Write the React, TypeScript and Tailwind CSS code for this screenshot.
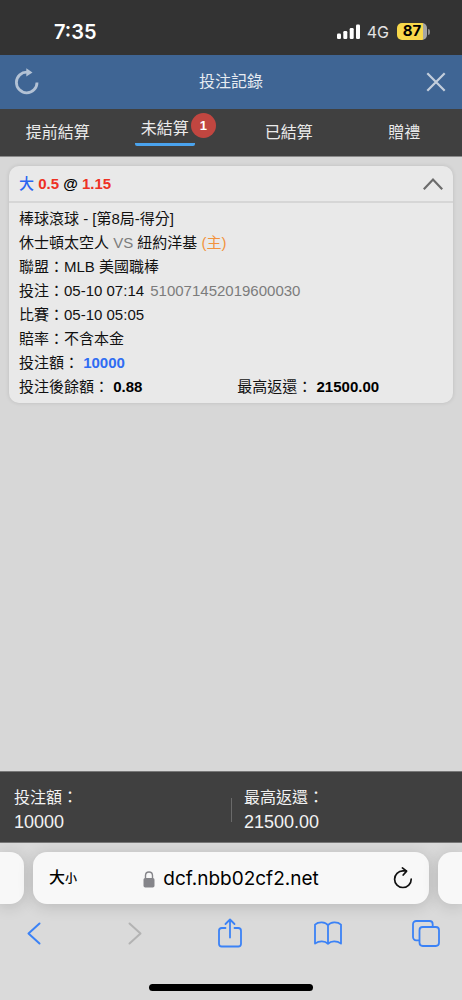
import React from "react";

const tabs = [
  { label: "提前結算" },
  { label: "未結算", count: 1 },
  { label: "已結算" },
  { label: "贈禮" },
];

function StatusBar() {
  return (
    <div className="flex h-[55px] shrink-0 items-center justify-between bg-[#333333] pt-2 pr-8 pl-[54px] font-['Inter','Liberation_Sans',sans-serif] text-white">
      <time className="text-xl font-semibold">7:35</time>
      <div className="flex items-center">
        <svg width="25" height="16" viewBox="0 0 25 16" fill="#fff" aria-hidden="true">
          <rect x="1" y="9.5" width="4" height="5.5" rx="1.2" />
          <rect x="7.3" y="7" width="4" height="8" rx="1.2" />
          <rect x="13.7" y="4" width="4" height="11" rx="1.2" />
          <rect x="20" y="0.5" width="4" height="14.5" rx="1.2" />
        </svg>
        <span className="ml-1.5 text-base text-[#e4e4e4]">4G</span>
        <span className="ml-2 flex items-center">
          <span className="flex h-[17px] w-[30px] items-center justify-center rounded-[5px] bg-[linear-gradient(90deg,#f8d84a_87%,#a5a5a5_87%)] text-[15px] font-bold text-black">
            87
          </span>
          <span className="ml-px h-1.5 w-0.5 rounded-r-full bg-[#8c8c8c]" />
        </span>
      </div>
    </div>
  );
}

function PageHeader() {
  return (
    <header className="flex h-[54px] shrink-0 items-center justify-between bg-[#3f6594] px-3 text-[#e6ebf1]">
      <button type="button" aria-label="重新整理" className="flex w-7 justify-center">
        <svg width="26" height="28" viewBox="0 1 26 28" fill="none" stroke="#b3c2d5" aria-hidden="true">
          <path d="M24 15.4A10.3 10.3 0 1 1 14.3 5.2" strokeWidth="2.8" />
          <path d="M13.3 1.2L19.5 5.4L13.3 9.6Z" fill="#b3c2d5" stroke="none" />
        </svg>
      </button>
      <h1 className="text-base">投注記錄</h1>
      <button type="button" aria-label="關閉" className="flex w-7 justify-center">
        <svg width="20" height="20" viewBox="0 0 20 20" fill="none" stroke="#c3cedc" strokeWidth="2.2" aria-hidden="true">
          <path d="M1.3 1.3L18.7 18.7M18.7 1.3L1.3 18.7" />
        </svg>
      </button>
    </header>
  );
}

function Tabs() {
  return (
    <nav className="grid h-12 shrink-0 grid-cols-4 border-b border-[#8a8a8a] bg-[#404040] text-base text-[#ebebeb]">
      {tabs.map((tab) => (
        <button key={tab.label} type="button" className="flex items-center justify-center">
          {tab.count ? (
            <span className="flex items-start pb-1.5 pl-1">
              <span className="rounded-b-xs border-b-3 border-[#4aa3ee] px-1.5 pt-1 pb-0.5">{tab.label}</span>
              <span className="-ml-1 flex size-[25px] items-center justify-center rounded-full bg-[#c14640] text-[13px] font-bold text-white">
                {tab.count}
              </span>
            </span>
          ) : (
            tab.label
          )}
        </button>
      ))}
    </nav>
  );
}

function BetCard() {
  return (
    <article className="rounded-[10px] bg-[#e9e9e9] text-[15px] leading-6 text-[#111] shadow-[0_0_4px_rgba(0,0,0,0.12)]">
      <div className="flex h-[37px] items-center justify-between border-b-2 border-[#d6d6d6] px-2.5">
        <h2 className="font-bold text-[#ee3124]">
          <span className="font-medium text-[#2b66f0]">大</span> 0.5 <span className="text-black">@</span> 1.15
        </h2>
        <button type="button" aria-label="收合">
          <svg width="20" height="12" viewBox="0 0 20 12" fill="none" stroke="#6c6c6c" strokeWidth="2.2" aria-hidden="true">
            <path d="M0.8 11.2L10 1.6L19.2 11.2" />
          </svg>
        </button>
      </div>
      <div className="px-2.5 py-1">
        <p>棒球滾球 - [第8局-得分]</p>
        <p>
          休士頓太空人 <span className="text-[#7c7c7c]">VS</span> 紐約洋基 <span className="text-[#f2923c]">(主)</span>
        </p>
        <p>聯盟：MLB 美國職棒</p>
        <p>
          投注：05-10 07:14 <span className="ml-0.5 text-[#7c7c7c]">510071452019600030</span>
        </p>
        <p>比賽：05-10 05:05</p>
        <p>賠率：不含本金</p>
        <p>
          投注額： <b className="text-[#2f6df3]">10000</b>
        </p>
        <div className="grid grid-cols-[103fr_97fr]">
          <p>
            投注後餘額： <b className="text-black">0.88</b>
          </p>
          <p>
            最高返還： <b className="text-black">21500.00</b>
          </p>
        </div>
      </div>
    </article>
  );
}

function Totals() {
  return (
    <footer className="grid h-[72px] shrink-0 grid-cols-2 items-center border-y border-[#777] bg-[#404040] pt-1.5 text-[#f2f2f2]">
      <div className="pl-3.5">
        <p className="text-base leading-6">投注額：</p>
        <p className="text-lg leading-6">10000</p>
      </div>
      <div className="flex items-center gap-3">
        <span className="h-6 w-px bg-[#6a6a6a]" />
        <div>
          <p className="text-base leading-6">最高返還：</p>
          <p className="text-lg leading-6">21500.00</p>
        </div>
      </div>
    </footer>
  );
}

function BrowserBar() {
  return (
    <div className="shrink-0 overflow-hidden bg-[#dadada] pt-[9px] pb-[9px]">
      <div className="flex h-[52px] gap-[9px]">
        <div className="w-6 shrink-0 rounded-r-[14px] bg-[#f8f8f8] shadow-[0_2px_16px_rgba(0,0,0,0.16)]" />
        <div className="flex flex-1 items-center justify-between rounded-[14px] bg-[#f8f8f8] px-4 text-black shadow-[0_2px_16px_rgba(0,0,0,0.16)]">
          <button type="button" className="w-8 text-left text-base leading-6 font-medium whitespace-nowrap">
            大<span className="text-xs">小</span>
          </button>
          <a href="#address" className="flex items-center gap-2 pt-0.5 font-['Inter','Liberation_Sans',sans-serif] text-[19px]">
            <svg width="12" height="17" viewBox="0 0 12 17" fill="none" aria-hidden="true">
              <rect x="0.5" y="7" width="11" height="9.5" rx="1.8" fill="#85858a" />
              <path d="M2.5 8V4.6C2.5 -0.2 9.5 -0.2 9.5 4.6V8" stroke="#85858a" strokeWidth="1.4" />
            </svg>
            dcf.nbb02cf2.net
          </a>
          <button type="button" aria-label="重新載入" className="flex w-8 justify-end">
            <svg width="20" height="23" viewBox="0 0 20 23" fill="none" stroke="#111" strokeWidth="1.7" strokeLinecap="round" strokeLinejoin="round" aria-hidden="true">
              <path d="M18.2 12.2A8.3 8.3 0 1 1 9.9 3.9H13.2" />
              <path d="M9.4 0.9L13.6 4.1L10.2 8" />
            </svg>
          </button>
        </div>
        <div className="w-6 shrink-0 rounded-l-[14px] bg-[#f8f8f8] shadow-[0_2px_16px_rgba(0,0,0,0.16)]" />
      </div>
      <nav className="mt-3.5 flex h-[30px] items-center justify-between pr-[22px] pl-5 text-[#3b82f6]">
        <button type="button" aria-label="上一頁" className="flex w-7 justify-center">
          <svg width="14" height="23" viewBox="0 0 14 23" fill="none" stroke="currentColor" strokeWidth="2" strokeLinecap="round" strokeLinejoin="round" aria-hidden="true">
            <path d="M12.5 1.5L1.5 11.5L12.5 21.5" />
          </svg>
        </button>
        <button type="button" aria-label="下一頁" className="flex w-7 justify-end pr-1 text-[#b3b3b3]">
          <svg width="14" height="23" viewBox="0 0 14 23" fill="none" stroke="currentColor" strokeWidth="2" strokeLinecap="round" strokeLinejoin="round" aria-hidden="true">
            <path d="M1.5 1.5L12.5 11.5L1.5 21.5" />
          </svg>
        </button>
        <button type="button" aria-label="分享" className="flex w-7 justify-center">
          <svg width="26" height="30" viewBox="0 0 26 30" fill="none" stroke="currentColor" strokeWidth="1.8" strokeLinecap="round" strokeLinejoin="round" aria-hidden="true">
            <path d="M8.5 10H4.8A2.8 2.8 0 0 0 2 12.8V25.7A2.8 2.8 0 0 0 4.8 28.5H21.2A2.8 2.8 0 0 0 24 25.7V12.8A2.8 2.8 0 0 0 21.2 10H17.5" />
            <path d="M13 19.5V1.8M8.5 6L13 1.5L17.5 6" />
          </svg>
        </button>
        <button type="button" aria-label="書籤" className="flex w-7 justify-center">
          <svg width="28" height="24" viewBox="0 0 28 24" fill="none" stroke="currentColor" strokeWidth="1.8" strokeLinecap="round" strokeLinejoin="round" aria-hidden="true">
            <path d="M14 4.2C11.5 0.6 4.5 0.4 1 3.6V22.6C5 19.6 11 19.6 14 22.8C17 19.6 23 19.6 27 22.6V3.6C23.5 0.4 16.5 0.6 14 4.2ZM14 4.2V22.8" />
          </svg>
        </button>
        <button type="button" aria-label="分頁" className="flex w-7 justify-center">
          <svg width="28" height="27" viewBox="0 0 28 27" fill="none" stroke="currentColor" strokeWidth="1.8" strokeLinejoin="round" aria-hidden="true">
            <rect x="7.5" y="7" width="19.5" height="19" rx="3.2" />
            <path d="M7.5 20.3H4.2A3.2 3.2 0 0 1 1 17.1V4.2A3.2 3.2 0 0 1 4.2 1H17.5A3.2 3.2 0 0 1 20.7 4.2V7" />
          </svg>
        </button>
      </nav>
      <div className="mx-auto mt-9 h-[7px] w-[164px] rounded-full bg-black" />
    </div>
  );
}

export default function App() {
  return (
    <div className="flex min-h-screen flex-col bg-[#d7d7d7] font-['Liberation_Sans','Noto_Sans_CJK_TC',sans-serif]">
      <StatusBar />
      <PageHeader />
      <Tabs />
      <main className="flex-1 px-[9px] py-[9px]">
        <BetCard />
      </main>
      <Totals />
      <BrowserBar />
    </div>
  );
}
